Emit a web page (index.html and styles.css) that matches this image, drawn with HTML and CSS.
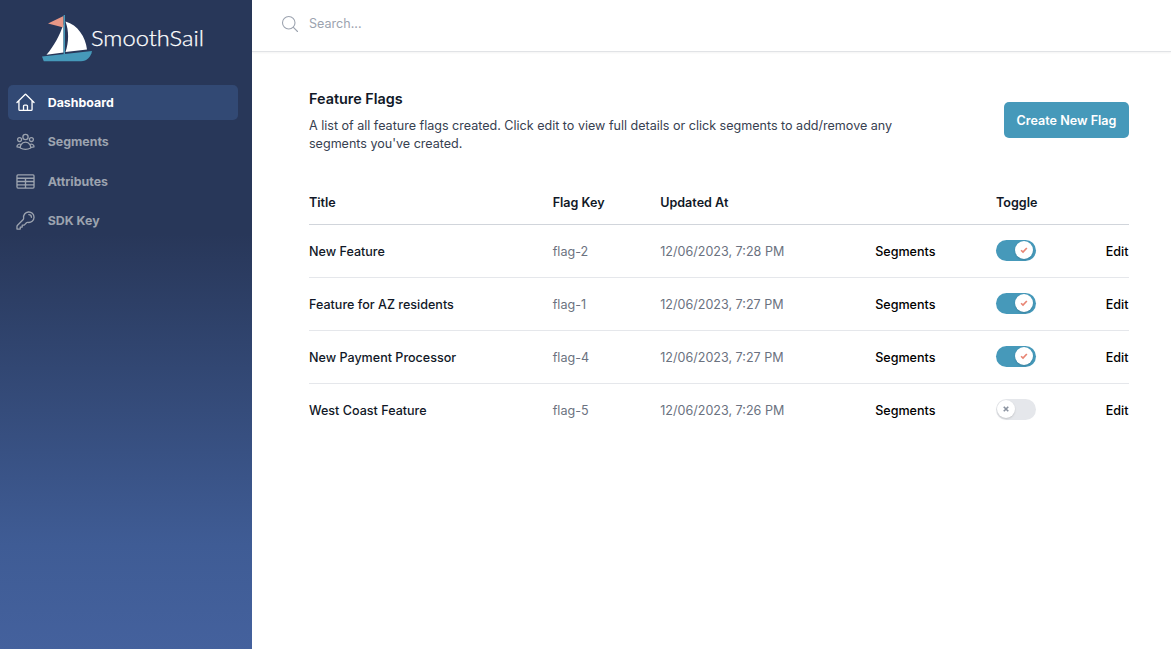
FILE: index.html
```html
<!DOCTYPE html>
<html lang="en">
<head>
<meta charset="utf-8">
<title>SmoothSail</title>
<link rel="stylesheet" href="styles.css">
</head>
<body>
<div class="app">
  <aside class="sidebar">
    <svg class="logo" width="168" height="52" viewBox="0 0 168 52">
      <path class="sail" d="M21.500 9 C18 20 12 31 4.500 39.800 L21.500 37.500Z"/>
      <path class="sail" d="M23.500 6.500 C36 10 43.500 22 45 34.500 L23.500 37 C27 27 27 16 23.500 6.500Z"/>
      <path class="pennant" d="M21.500 1 L6 8.500 L21.500 12.500Z"/>
      <path class="mast" d="M22.300 0V39"/>
      <path class="hull" d="M0 41.500 L50 36 C49 42 45 46 39 46.300 H1.800Z"/>
      <text class="wordmark" x="49" y="31" textLength="113" lengthAdjust="spacingAndGlyphs">SmoothSail</text>
    </svg>
    <nav class="nav">
      <a class="nav-item active">
        <svg class="icon" viewBox="0 0 24 24"><path d="M2.25 12l8.954-8.955c.44-.439 1.152-.439 1.591 0L21.75 12M4.5 9.75v10.125c0 .621.504 1.125 1.125 1.125H9.75v-4.875c0-.621.504-1.125 1.125-1.125h2.25c.621 0 1.125.504 1.125 1.125V21h4.125c.621 0 1.125-.504 1.125-1.125V9.75M8.25 21h8.25"/></svg>
        <span>Dashboard</span>
      </a>
      <a class="nav-item">
        <svg class="icon" viewBox="0 0 24 24"><path d="M18 18.72a9.094 9.094 0 003.741-.479 3 3 0 00-4.682-2.72m.94 3.198l.001.031c0 .225-.012.447-.037.666A11.944 11.944 0 0112 21c-2.17 0-4.207-.576-5.963-1.584A6.062 6.062 0 016 18.719m12 0a5.971 5.971 0 00-.941-3.197m0 0A5.995 5.995 0 0012 12.75a5.995 5.995 0 00-5.058 2.772m0 0a3 3 0 00-4.681 2.72 8.986 8.986 0 003.74.477m.94-3.197a5.971 5.971 0 00-.94 3.197M15 6.75a3 3 0 11-6 0 3 3 0 016 0zm6 3a2.25 2.25 0 11-4.5 0 2.25 2.25 0 014.5 0zm-13.5 0a2.25 2.25 0 11-4.5 0 2.25 2.25 0 014.5 0z"/></svg>
        <span>Segments</span>
      </a>
      <a class="nav-item">
        <svg class="icon" viewBox="0 0 24 24"><path d="M3.375 19.5h17.25m-17.25 0a1.125 1.125 0 01-1.125-1.125M3.375 19.5h7.5c.621 0 1.125-.504 1.125-1.125m-9.75 0V5.625m0 12.75v-1.5c0-.621.504-1.125 1.125-1.125m18.375 2.625V5.625m0 12.75c0 .621-.504 1.125-1.125 1.125m1.125-1.125v-1.5c0-.621-.504-1.125-1.125-1.125m0 3.75h-7.5A1.125 1.125 0 0112 18.375m9.75-12.75c0-.621-.504-1.125-1.125-1.125H3.375c-.621 0-1.125.504-1.125 1.125m19.5 0v1.5c0 .621-.504 1.125-1.125 1.125M2.25 5.625v1.5c0 .621.504 1.125 1.125 1.125m0 0h17.25m-17.25 0h7.5c.621 0 1.125.504 1.125 1.125M3.375 8.25c-.621 0-1.125.504-1.125 1.125v1.5c0 .621.504 1.125 1.125 1.125m17.25-3.75h-7.5c-.621 0-1.125.504-1.125 1.125m8.625-1.125c.621 0 1.125.504 1.125 1.125v1.5c0 .621-.504 1.125-1.125 1.125m-17.25 0h7.5m-7.5 0c-.621 0-1.125.504-1.125 1.125v1.5c0 .621.504 1.125 1.125 1.125M12 10.875v-1.5m0 1.5c0 .621-.504 1.125-1.125 1.125M12 10.875c0 .621.504 1.125 1.125 1.125m-2.25 0c.621 0 1.125.504 1.125 1.125M13.125 12h7.5m-7.5 0c-.621 0-1.125.504-1.125 1.125M20.625 12c.621 0 1.125.504 1.125 1.125v1.5c0 .621-.504 1.125-1.125 1.125m-17.25 0h7.5M12 14.625v-1.5m0 1.5c0 .621-.504 1.125-1.125 1.125M12 14.625c0 .621.504 1.125 1.125 1.125m-2.25 0c.621 0 1.125.504 1.125 1.125m0 1.500v-1.500m0 0c0-.621.504-1.125 1.125-1.125m0 0h7.500"/></svg>
        <span>Attributes</span>
      </a>
      <a class="nav-item">
        <svg class="icon" viewBox="0 0 24 24"><path d="M15.75 5.250a3 3 0 013 3m3 0a6 6 0 01-7.029 5.912c-.563-.097-1.159.026-1.563.430L10.500 17.250H8.250v2.250H6v2.250H2.250v-2.818c0-.597.237-1.170.659-1.591l6.499-6.499c.404-.404.527-1 .430-1.563A6 6 0 1121.750 8.250z"/></svg>
        <span>SDK Key</span>
      </a>
    </nav>
  </aside>
  <div class="content">
    <header class="topbar">
      <svg class="icon search-icon" viewBox="0 0 24 24"><path d="M21 21l-5.197-5.197m0 0A7.500 7.500 0 105.196 5.196a7.500 7.500 0 0010.607 10.607z"/></svg>
      <span class="search">Search...</span>
    </header>
    <main class="main">
      <section class="intro">
        <div class="intro-text">
          <h1 class="title">Feature Flags</h1>
          <p class="description">A list of all feature flags created. Click edit to view full details or click segments to add/remove any<br>segments you've created.</p>
        </div>
        <button class="create">Create New Flag</button>
      </section>
      <section class="table">
        <div class="row head"><span>Title</span><span>Flag Key</span><span>Updated At</span><span></span><span>Toggle</span><span></span></div>
        <div class="row"><span class="name">New Feature</span><span class="muted">flag-2</span><span class="muted">12/06/2023, 7:28 PM</span><span class="link">Segments</span><span class="toggle on"><span class="knob"><svg class="mark" viewBox="0 0 12 12"><path d="M2.500 6.300L4.800 8.500L9.400 3.600"/></svg></span></span><span class="link edit">Edit</span></div>
        <div class="row"><span class="name">Feature for AZ residents</span><span class="muted">flag-1</span><span class="muted">12/06/2023, 7:27 PM</span><span class="link">Segments</span><span class="toggle on"><span class="knob"><svg class="mark" viewBox="0 0 12 12"><path d="M2.500 6.300L4.800 8.500L9.400 3.600"/></svg></span></span><span class="link edit">Edit</span></div>
        <div class="row"><span class="name">New Payment Processor</span><span class="muted">flag-4</span><span class="muted">12/06/2023, 7:27 PM</span><span class="link">Segments</span><span class="toggle on"><span class="knob"><svg class="mark" viewBox="0 0 12 12"><path d="M2.500 6.300L4.800 8.500L9.400 3.600"/></svg></span></span><span class="link edit">Edit</span></div>
        <div class="row"><span class="name">West Coast Feature</span><span class="muted">flag-5</span><span class="muted">12/06/2023, 7:26 PM</span><span class="link">Segments</span><span class="toggle"><span class="knob"><svg class="mark" viewBox="0 0 12 12"><path d="M3.300 3.300L8.700 8.700M8.700 3.300L3.300 8.700"/></svg></span></span><span class="link edit">Edit</span></div>
      </section>
    </main>
  </div>
</div>
</body>
</html>
```
FILE: styles.css
```css
* { box-sizing: border-box; }
body {
  margin: 0;
  font-family: Inter, "Liberation Sans", sans-serif;
  font-size: 12.570px;
  line-height: 18px;
  color: #111827;
  background: #fff;
}
.app { display: flex; height: 649px; }
.sidebar {
  width: 252px;
  flex: none;
  padding: 15px 14px 0 8px;
  background: linear-gradient(#283759 0, #283759 36%, #3f5c95 84%, #44619d 100%);
}
.logo { display: block; margin-left: 34px; }
.sail { fill: #fff; }
.pennant { fill: #e89786; }
.mast { stroke: #4699ba; stroke-width: 1.4; }
.hull { fill: #4699ba; }
.wordmark { font-family: Lato, sans-serif; font-weight: 300; font-size: 22px; fill: #fff; stroke: #fff; stroke-width: .25; }
.nav { display: flex; flex-direction: column; gap: 4.400px; margin-top: 18px; }
.nav-item {
  display: flex;
  align-items: center;
  gap: 11.700px;
  height: 35px;
  padding: 0 7px;
  border-radius: 5px;
  color: #9ca3af;
  font-size: 12.400px;
  line-height: 17.500px;
  font-weight: 700;
}
.nav-item.active { color: #fff; background: #324974; }
.icon {
  width: 21px;
  height: 21px;
  flex: none;
  fill: none;
  stroke: currentColor;
  stroke-width: 1.5;
  stroke-linecap: round;
  stroke-linejoin: round;
}
.content { flex: 1; }
.topbar {
  display: flex;
  align-items: center;
  height: 52px;
  padding: 0 28px 4px;
  gap: 9px;
  border-bottom: 1px solid #e1e3e6;
  box-shadow: 0 1px 2px rgba(0, 0, 0, .05);
  color: #9ca3af;
}
.search-icon { width: 20px; height: 20px; stroke-width: 1.300; }
.main { padding: 36px 42px 0 57px; }
.intro { display: flex; justify-content: space-between; align-items: center; height: 64px; }
.intro-text { padding-top: 2px; }
.title { margin: 0 0 8px; font-size: 14.400px; line-height: 20px; font-weight: 600; }
.description { margin: 0; color: #374151; font-size: 12.550px; white-space: nowrap; }
.create {
  width: 125px;
  height: 36px;
  padding: 1px 0 0;
  border: 0;
  border-radius: 5px;
  background: #4699ba;
  color: #fff;
  font: inherit;
  font-weight: 600;
  white-space: nowrap;
}
.table { margin-top: 29px; }
.row {
  display: grid;
  grid-template-columns: 243.700px 107.500px 215px 120.800px 1fr auto;
  align-items: center;
  height: 53px;
  padding-top: 2px;
  border-bottom: 1px solid #e5e7eb;
}
.row:last-child { border-bottom-color: transparent; }
.row.head { height: 44px; padding-top: 0; border-color: #d1d5db; font-weight: 600; }
.name { font-weight: 500; }
.muted { color: #6b7280; }
.link { font-weight: 500; color: #000; }
.edit { margin-right: .5px; }
.toggle {
  display: flex;
  width: 40px;
  height: 21px;
  padding: 1.500px 1px;
  margin-top: -4px;
  border-radius: 11px;
  background: #e5e7eb;
}
.toggle.on { justify-content: flex-end; padding-right: 3px; background: #4699ba; }
.knob {
  display: flex;
  align-items: center;
  justify-content: center;
  width: 18px;
  height: 18px;
  border-radius: 50%;
  background: #fff;
  box-shadow: 0 1px 2px rgba(0, 0, 0, .15);
}
.mark { width: 10px; height: 10px; fill: none; stroke: #8b93a0; stroke-width: 2; }
.on .mark { stroke: #e88574; stroke-width: 2; }
```
